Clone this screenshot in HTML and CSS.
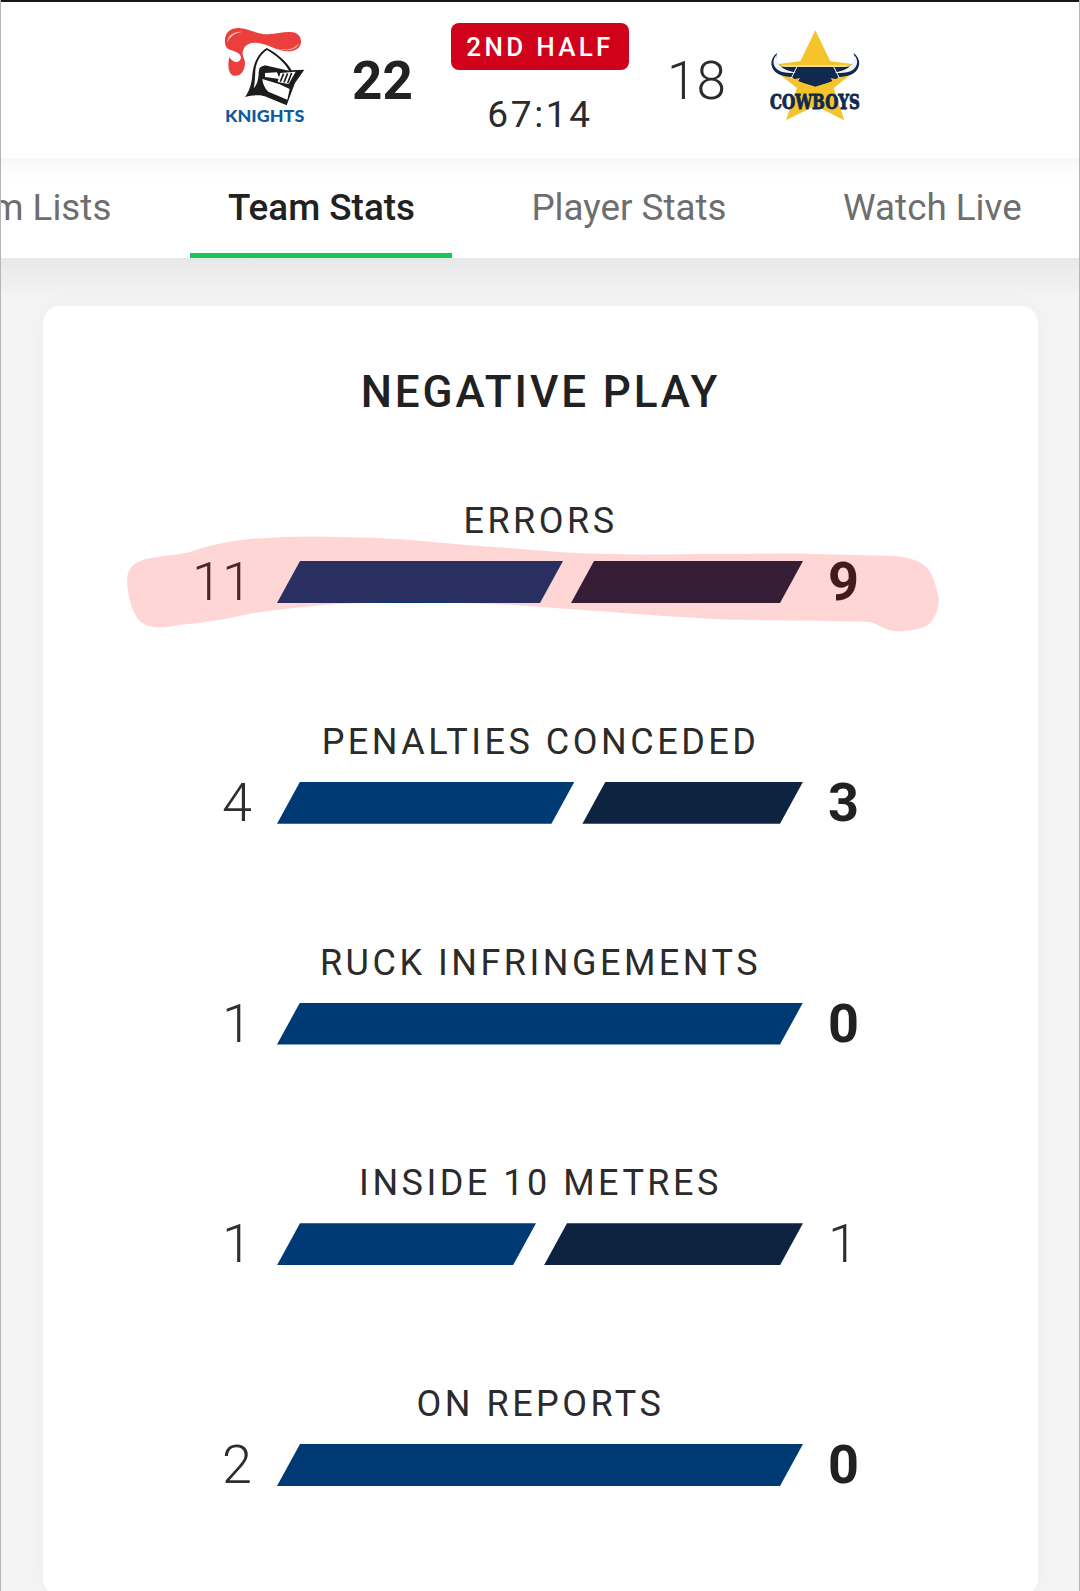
FILE: index.html
```html
<!DOCTYPE html>
<html lang="en">
<head>
<meta charset="utf-8">
<title>Team Stats</title>
<link rel="stylesheet" href="styles.css">
</head>
<body>
<div class="page">
  <header class="scoreboard">
    <svg class="logo-k" viewBox="60 70 270 310" aria-label="Knights">
      <path class="k-red" d="M75 130C72 100 90 85 115 85C145 85 170 105 205 104C240 102 285 85 300 112C310 135 295 158 260 155C230 152 205 135 175 130C155 128 138 132 130 150C122 165 135 175 135 190C135 215 120 232 100 228C85 222 82 195 88 172C95 185 115 195 122 178C128 162 105 155 90 150C80 147 76 140 75 130Z"/>
      <path class="k-pink" d="M81 128C84 106 104 94 128 97C108 98 92 108 81 128ZM240 148C262 152 285 148 297 130C290 152 262 156 240 148Z"/>
      <g transform="translate(135 120)">
        <path class="k-white" d="M65 18C36 34 18 68 16 105C14 135 8 155 -6 176L60 176L128 202L180 90L142 88C125 60 95 34 65 18Z"/>
        <path class="k-black" d="M65 25C40 40 25 70 22 105C20 135 12 155 0 172C30 165 50 165 65 172L125 197L135 170L150 130L178 90L140 92C125 65 95 40 65 25Z"/>
        <path class="k-white" d="M66 31C44 46 34 68 31 92C30 112 30 130 26 146C36 136 41 118 41 98C43 84 52 76 66 78L132 93C118 68 92 46 66 31Z"/>
        <path class="k-white" d="M60 100L96 98L104 118L60 112Z"/>
        <path class="k-white" d="M52 118L104 134L134 148L127 180L70 156C59 146 53 132 52 118Z"/>
        <path class="k-white" d="M106 100L152 96L131 133L98 127Z"/>
        <path class="k-slits" d="M116 102L106 126M128 101L117 128M140 100L128 130"/>
        <circle class="k-black" cx="52" cy="90" r="9"/>
      </g>
      <text class="k-text" x="75" y="367" textLength="238" lengthAdjust="spacingAndGlyphs">KNIGHTS</text>
    </svg>
    <div class="score score-win">22</div>
    <div class="status">
      <div class="badge">2ND HALF</div>
      <div class="clock">67:14</div>
    </div>
    <div class="score score-away">18</div>
    <svg class="logo-c" viewBox="380 88 292 280" aria-label="Cowboys">
      <g transform="translate(375 135)">
        <path class="c-gold" d="M150 -43L195 50L280 60L250 95L205 130L237 227L150 183L62 227L95 130L50 95L20 60L105 50Z"/>
        <path class="c-navy" d="M35 25C15 40 12 65 30 82C50 98 70 95 95 100L100 110L150 128L200 110L205 100C230 95 250 98 270 82C288 65 285 40 265 25C272 50 262 62 240 67L60 67C38 62 28 50 35 25Z"/>
        <path class="c-light" d="M33 32C20 45 22 66 38 76C52 85 72 86 92 84C62 78 36 70 33 32ZM267 32C280 45 278 66 262 76C248 85 228 86 208 84C238 78 264 70 267 32Z"/>
        <path class="c-line" d="M42 64L258 64M95 66L78 100M205 66L222 100"/>
        <path class="c-navy" d="M98 72L202 72L218 100L185 115L150 125L115 115L82 100Z"/>
        <path class="c-gold-line" d="M78 108L100 103L95 112L150 128L205 112L200 103L222 108"/>
      </g>
      <text class="c-text" x="389" y="327" textLength="270" lengthAdjust="spacingAndGlyphs">COWBOYS</text>
    </svg>
  </header>

  <nav class="tabs">
    <span class="tab tab-first">Team Lists</span>
    <span class="tab tab-active">Team Stats</span>
    <span class="tab">Player Stats</span>
    <span class="tab">Watch Live</span>
  </nav>

  <main class="content">
    <section class="card">
      <h1 class="card-title">NEGATIVE PLAY</h1>

      <div class="stat">
        <div class="stat-label">ERRORS</div>
        <div class="stat-row">
          <span class="num num-left">11</span>
          <div class="bars">
            <span class="bar bar-home" style="flex-grow:286"></span>
            <span class="bar bar-away" style="flex-grow:232"></span>
          </div>
          <span class="num num-right num-bold">9</span>
        </div>
      </div>

      <div class="stat">
        <div class="stat-label">PENALTIES CONCEDED</div>
        <div class="stat-row">
          <span class="num num-left">4</span>
          <div class="bars">
            <span class="bar bar-home" style="flex-grow:298"></span>
            <span class="bar bar-away" style="flex-grow:221"></span>
          </div>
          <span class="num num-right num-bold">3</span>
        </div>
      </div>

      <div class="stat">
        <div class="stat-label">RUCK INFRINGEMENTS</div>
        <div class="stat-row">
          <span class="num num-left">1</span>
          <div class="bars">
            <span class="bar bar-home" style="flex-grow:1"></span>
          </div>
          <span class="num num-right num-bold">0</span>
        </div>
      </div>

      <div class="stat">
        <div class="stat-label">INSIDE 10 METRES</div>
        <div class="stat-row">
          <span class="num num-left">1</span>
          <div class="bars">
            <span class="bar bar-home" style="flex-grow:1"></span>
            <span class="bar bar-away" style="flex-grow:1"></span>
          </div>
          <span class="num num-right">1</span>
        </div>
      </div>

      <div class="stat">
        <div class="stat-label">ON REPORTS</div>
        <div class="stat-row">
          <span class="num num-left">2</span>
          <div class="bars">
            <span class="bar bar-home" style="flex-grow:1"></span>
          </div>
          <span class="num num-right num-bold">0</span>
        </div>
      </div>
    </section>
  </main>

  <svg class="scribble" viewBox="0 0 1080 700" aria-hidden="true">
    <path d="M127 578C129 566 135 562 146 559C165 555 178 555 190 552C210 545 228 541 250 539C280 537 305 536 330 537C360 537 385 538 410 540C445 543 475 546 510 548C545 551 580 554 615 554C650 555 680 554 715 554C750 554 785 553 815 554C845 555 870 555 895 556C910 558 918 560 925 566C933 573 936 585 939 599C938 610 936 618 928 625C920 630 905 632 893 631C885 630 880 625 870 622C820 620 765 621 715 619C680 617 645 615 610 612C575 609 540 607 510 605C475 603 440 602 410 602C380 602 350 603 325 605C300 607 275 610 254 613C230 618 210 622 188 624C175 625 168 628 155 627C145 626 138 622 134 612C130 605 127 590 127 578Z"/>
  </svg>
</div>
</body>
</html>
```

FILE: styles.css
```css
* { box-sizing: border-box; }
html, body { margin: 0; padding: 0; }
body {
  width: 1080px;
  height: 1591px;
  overflow: hidden;
  background: #f4f4f4;
  font-family: Roboto, "Liberation Sans", sans-serif;
  color: #212121;
}
.page {
  position: relative;
  width: 1080px;
  height: 1591px;
  overflow: hidden;
}
.page::after {
  content: "";
  position: absolute;
  inset: 0;
  border-left: 1px solid #b5b5b5;
  border-right: 1px solid #b5b5b5;
  pointer-events: none;
}

/* scoreboard */
.scoreboard {
  height: 158px;
  border-top: 2px solid #14181c;
  background: #fff;
  display: flex;
  align-items: flex-start;
}
.logo-k { width: 90px; height: 103.3px; margin: 21.3px 0 0 220px; flex: none; overflow: visible; }
.k-red { fill: #ea3f3c; }
.k-pink { fill: #f9c4bf; }
.k-black { fill: #1c1c1c; }
.k-white { fill: #fff; }
.k-slits { stroke: #1c1c1c; stroke-width: 5; fill: none; }
.k-text {
  font-family: Lato, sans-serif;
  font-weight: 900;
  font-size: 53px;
  fill: #0f5aa0;
}
.score {
  font-size: 53px;
  font-weight: 300;
  line-height: 60px;
  width: 60px;
  margin-top: 49px;
  flex: none;
  color: #2b2b2b;
}
.score-win { font-weight: 700; margin-left: 42px; color: #212121; }
.score-away { margin-left: 38px; }
.status {
  width: 178px;
  margin: 21.3px 0 0 39px;
  flex: none;
  display: flex;
  flex-direction: column;
  align-items: center;
}
.badge {
  width: 178px;
  height: 47px;
  background: #d0021b;
  border-radius: 8px;
  color: #fff;
  font-size: 26px;
  font-weight: 500;
  letter-spacing: 3.3px;
  line-height: 49px;
  text-align: center;
}
.clock {
  font-size: 37px;
  letter-spacing: 2.7px;
  line-height: 42px;
  margin-top: 24px;
  color: #2b2b2b;
}
.logo-c { width: 97.3px; height: 93.3px; margin: 27.3px 0 0 39.7px; flex: none; overflow: visible; }
.c-gold { fill: #f5c42c; }
.c-navy { fill: #12294f; }
.c-light { fill: #f3f3f3; }
.c-line { stroke: #f3f3f3; stroke-width: 3; fill: none; }
.c-gold-line { stroke: #f5c42c; stroke-width: 4; fill: none; }
.c-text {
  font-family: "DejaVu Serif", serif;
  font-weight: 700;
  font-size: 62px;
  fill: #12294f;
  stroke: #12294f;
  stroke-width: 3;
}

/* tabs */
.tabs {
  height: 100px;
  background: linear-gradient(#f7f7f7 0, #fff 22px);
  display: flex;
  gap: 41.5px;
  font-size: 36.8px;
  color: #6e6e6e;
}
.tab {
  position: relative;
  height: 100px;
  padding: 30px 37.5px 0;
  line-height: 40px;
  white-space: nowrap;
  flex: none;
}
.tab-first { margin-left: -106px; }
.tab-active { color: #212121; font-weight: 500; }
.tab-active::after {
  content: "";
  position: absolute;
  left: 0;
  right: 0;
  bottom: 0;
  height: 5px;
  background: #17c45e;
}

/* card */
.content {
  height: 1333px;
  padding: 48px 42px 0 43px;
  background: linear-gradient(#e8e8e8 0, #f4f4f4 42px);
}
.card {
  height: 1290px;
  background: #fff;
  border-radius: 17px;
  box-shadow: 0 0 24px rgba(0,0,0,.03);
  padding-top: 60px;
}
.card-title {
  margin: 0 0 83px;
  text-align: center;
  font-size: 44px;
  font-weight: 500;
  letter-spacing: 2.9px;
  line-height: 52px;
  color: #212121;
}
.stat { height: 220.75px; }
.stat-label {
  text-align: center;
  font-size: 36px;
  letter-spacing: 3.5px;
  line-height: 40px;
  color: #2b2b2b;
}
.stat-row {
  display: flex;
  align-items: center;
  height: 60px;
  margin-top: 11px;
  padding-left: 149px;
}
.num {
  font-size: 54px;
  line-height: 60px;
  font-weight: 300;
  color: #2e2e2e;
  flex: none;
}
.num-left { width: 60px; text-align: right; margin-right: 25px; }
.num-right { width: 40px; margin-left: 25px; }
.num-bold { font-weight: 700; color: #212121; }
.bars { flex: none; width: 526px; height: 42px; display: flex; gap: 8px; }
.bar {
  display: block;
  height: 42px;
  min-width: 0;
  flex-basis: 0;
  clip-path: polygon(23px 0, 100% 0, calc(100% - 23px) 100%, 0 100%);
}
.bar-home { background: #003a74; }
.bar-away { background: #0e2340; }

/* highlighter stroke drawn over the first row */
.scribble {
  position: absolute;
  left: 0;
  top: 0;
  width: 1080px;
  height: 700px;
  pointer-events: none;
}
.scribble path { fill: rgba(255,0,0,.16); }
```
